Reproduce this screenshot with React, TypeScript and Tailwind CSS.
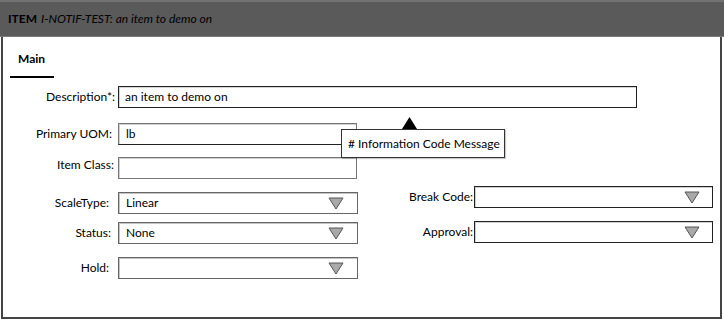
import React from "react";

const font = { fontFamily: "Lato, 'Open Sans', sans-serif" };

function Caret() {
  return (
    <svg width="16" height="13" viewBox="0 0 16 13" className="block shrink-0">
      <polygon points="1,1 15,1 8,12" fill="#a9a9a9" stroke="#555" strokeWidth="1" strokeLinejoin="round" />
    </svg>
  );
}

function Select({ value, dark }: { value?: string; dark?: boolean }) {
  return (
    <div
      className={
        dark
          ? "flex h-[22px] w-full items-center justify-between border border-[#222] pl-[7px] pr-[12px] shadow-[inset_1px_1px_0_#d0d0d0]"
          : "flex h-[22px] w-full items-center justify-between border border-[#666] pl-[7px] pr-[13px] shadow-[inset_1px_1px_0_#c4c4c4]"
      }
    >
      <span className="text-[12px] text-black">{value}</span>
      <Caret />
    </div>
  );
}

export default function App() {
  return (
    <div className="relative h-[320px] w-[724px] overflow-hidden bg-white text-black" style={font}>
      <div className="flex h-[37px] w-full items-center border-t-2 border-b border-t-[#737373] border-b-[#7a7a7a] bg-[#5a5a5a] pl-[8px] text-[12px] text-black">
        <span className="font-bold">ITEM</span>
        <span className="ml-[4px] italic">I-NOTIF-TEST: an item to demo on</span>
      </div>

      <div className="ml-[1px] flex h-[282px] w-[721px] flex-col border-2 border-t-0 border-[#444]">
        {/* tab */}
        <div className="ml-[7px] mt-[13px] w-[44px] border-b-2 border-black pb-[8px] pl-[8px] text-[12px] font-bold">Main</div>

        {/* description */}
        <div className="mt-[8px] flex items-center">
          <div className="w-[115px] pr-[3px] text-right text-[12px]">Description*:</div>
          <div className="flex h-[22px] w-[519px] items-center border border-[#222] pl-[6px] text-[12px] shadow-[inset_1px_1px_0_#d4d4d4]">
            an item to demo on
          </div>
        </div>

        {/* primary uom with tooltip */}
        <div className="relative mt-[15px] flex items-center">
          <div className="w-[115px] pr-[6px] text-right text-[12px]">Primary UOM:</div>
          <div className="flex h-[22px] w-[239px] items-center border border-[#777] border-b-[#222] pl-[7px] text-[12px] shadow-[inset_1px_1px_0_#cfcfcf]">
            lb
          </div>
          <div className="absolute left-[338px] top-[-6px] z-10 flex flex-col items-start">
            <svg width="15" height="12" viewBox="0 0 15 12" className="ml-[61px] block">
              <polygon points="7.5,0 15,12 0,12" fill="#000" />
            </svg>
            <div className="flex h-[29px] w-[164px] items-center border border-[#333] bg-white pl-[6px] text-[12px] shadow-[1px_1px_1px_rgba(0,0,0,0.2)]">
              # Information Code Message
            </div>
          </div>
        </div>

        {/* item class */}
        <div className="mt-[12px] flex items-start">
          <div className="mt-[-1px] w-[115px] pr-[4px] text-right text-[12px]">Item Class:</div>
          <div className="h-[22px] w-[239px] border border-[#777] shadow-[inset_1px_1px_0_#cfcfcf]" />
        </div>

        {/* two columns */}
        <div className="flex">
          <div className="flex w-[356px] flex-col">
            <div className="mt-[13px] flex items-center">
              <div className="w-[115px] pr-[9px] text-right text-[12px]">ScaleType:</div>
              <div className="w-[240px]"><Select value="Linear" /></div>
            </div>
            <div className="mt-[8px] flex items-center">
              <div className="w-[115px] pr-[7px] text-right text-[12px]">Status:</div>
              <div className="w-[240px]"><Select value="None" /></div>
            </div>
            <div className="mt-[13px] flex items-center">
              <div className="w-[115px] pr-[9px] text-right text-[12px]">Hold:</div>
              <div className="w-[240px]"><Select /></div>
            </div>
          </div>
          <div className="flex flex-col">
            <div className="mt-[7px] flex items-center">
              <div className="w-[115px] pr-[1px] text-right text-[12px]">Break Code:</div>
              <div className="w-[239px]"><Select dark /></div>
            </div>
            <div className="mt-[13px] flex items-center">
              <div className="w-[115px] pr-[1px] text-right text-[12px]">Approval:</div>
              <div className="w-[239px]"><Select dark /></div>
            </div>
          </div>
        </div>
      </div>
    </div>
  );
}
